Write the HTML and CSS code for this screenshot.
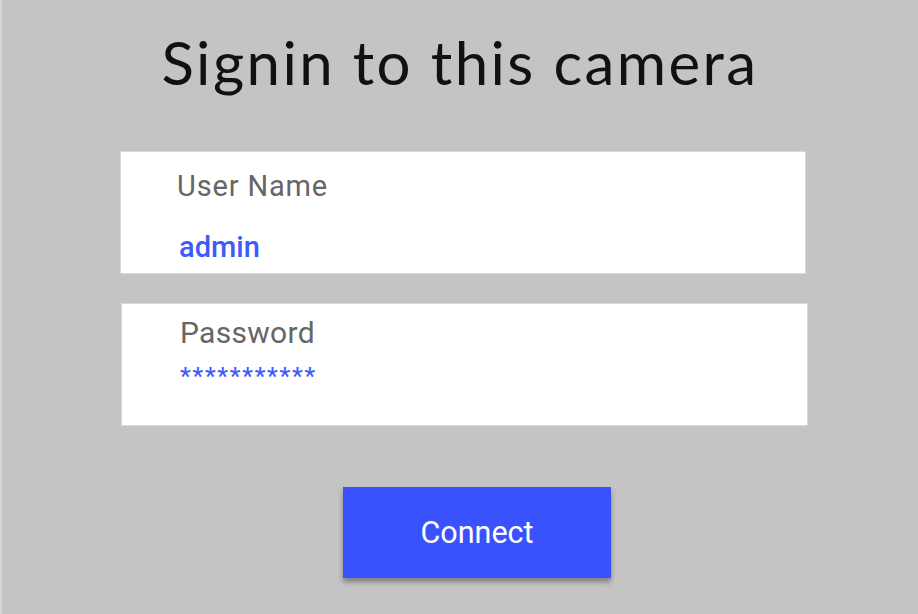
FILE: index.html
```html
<!DOCTYPE html>
<html lang="en">
<head>
<meta charset="utf-8">
<title>Signin to this camera</title>
<link rel="stylesheet" href="styles.css">
</head>
<body>
<div class="edge"></div>
<main class="page">
  <h1 class="title">Signin to this camera</h1>
  <div class="field field-user">
    <div class="label">User Name</div>
    <div class="value">admin</div>
  </div>
  <div class="field field-pass">
    <div class="label label-pass">Password</div>
    <div class="value value-pass">***********</div>
  </div>
  <button class="connect" type="button">Connect</button>
</main>
</body>
</html>
```
FILE: styles.css
```css
html, body {
  margin: 0;
  padding: 0;
  height: 100%;
}
body {
  background: #c4c4c4;
  display: flex;
  overflow: hidden;
}
.edge {
  width: 2px;
  flex: none;
  background: #d6d6d6;
}
.page {
  display: flex;
  flex-direction: column;
  align-items: flex-start;
  padding-left: 118px;
}
.title {
  margin: 22px 0 49px;
  width: 686px;
  padding-right: 6px;
  box-sizing: border-box;
  text-align: center;
  font-family: Lato, "Noto Sans", sans-serif;
  font-weight: 400;
  font-size: 60px;
  line-height: 80px;
  letter-spacing: 2.4px;
  color: #111;
}
.field {
  box-sizing: border-box;
  width: 686px;
  height: 123px;
  background: #fff;
  border: 1px solid #dcd8d8;
  display: flex;
  flex-direction: column;
  font-family: Roboto, "Liberation Sans", sans-serif;
}
.field-user {
  padding: 17px 0 0 56px;
}
.field-pass {
  margin: 29px 0 0 1px;
  width: 687px;
  padding: 11px 0 0 58px;
}
.label {
  font-size: 29px;
  line-height: 34px;
  color: #666;
  letter-spacing: 0.85px;
}
.label-pass {
  font-size: 30px;
  line-height: 35px;
  letter-spacing: 0.3px;
}
.value {
  margin: 28px 0 0 2px;
  font-size: 29px;
  line-height: 33px;
  font-weight: 500;
  color: #3d5afe;
}
.value-pass {
  margin: 13px 0 0 0;
  font-size: 24px;
  line-height: 26px;
  font-weight: 500;
  letter-spacing: 1.8px;
}
.connect {
  margin: 61px 0 0 223px;
  width: 268px;
  height: 91px;
  border: none;
  background: #3a52fe;
  color: #fff;
  font-family: Roboto, "Liberation Sans", sans-serif;
  font-size: 30.5px;
  box-shadow: 0 4px 5px rgba(0, 0, 0, 0.35);
  padding: 0;
}
```
